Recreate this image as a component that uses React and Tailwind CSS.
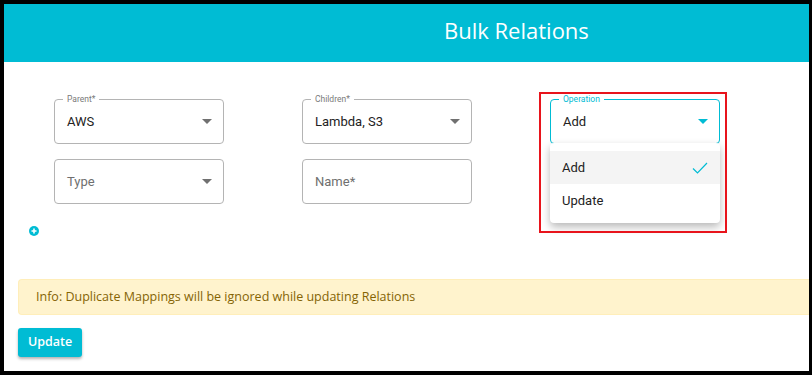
import React from "react";

const roboto = { fontFamily: "Roboto, 'Liberation Sans', sans-serif" };
const openSans = { fontFamily: "'Open Sans', 'Liberation Sans', sans-serif" };

function Caret({ color = "#707070" }) {
    return (
        <svg width="10" height="5" viewBox="0 0 10 5" className="shrink-0">
            <path d="M0 0 L10 0 L5 5 Z" fill={color} />
        </svg>
    );
}

function Field({ label, value, placeholder, select = true, focused = false }) {
    const border = focused ? "border-[#00bcd4]" : "border-[#b4b4b4]";
    return (
        <div className={`relative h-[45px] w-[170px] rounded-[4px] border ${border} flex items-center justify-between pl-[12px] pr-[11px]`}>
            {label ? (
                <span
                    className={`absolute -top-[6px] left-[8px] bg-white px-[4px] text-[8.5px] leading-[10px] ${focused ? "text-[#00bcd4]" : "text-[#7a7a7a]"}`}
                >
                    {label}
                </span>
            ) : null}
            {value ? (
                <span className="text-[13px] text-[#222]">{value}</span>
            ) : (
                <span className="text-[13px] text-[#6f6f6f]">{placeholder}</span>
            )}
            {select ? <Caret color={focused ? "#00bcd4" : "#707070"} /> : null}
        </div>
    );
}

export default function App() {
    return (
        <div className="w-[812px] h-[375px] bg-black pt-[4px] pl-[4px] pr-[3px] pb-[4px]">
            <div className="h-full bg-white flex flex-col overflow-hidden">
                <div className="h-[58px] shrink-0 bg-[#00bcd4] flex items-center pl-[440px]">
                    <h1 className="text-white text-[22px] leading-none -mt-[6px]" style={openSans}>
                        Bulk Relations
                    </h1>
                </div>

                <div className="pl-[50px] pt-[37px] flex gap-[78px]" style={roboto}>
                    <div className="flex flex-col gap-[15px]">
                        <Field label="Parent*" value="AWS" />
                        <Field placeholder="Type" />
                    </div>
                    <div className="flex flex-col gap-[15px]">
                        <Field label="Children*" value="Lambda, S3" />
                        <Field placeholder="Name*" select={false} />
                    </div>
                    <div className="relative">
                        <Field label="Operation" value="Add" focused />
                        <div className="absolute left-0 top-[44px] w-[170px] bg-white rounded-[4px] shadow-[0_4px_8px_rgba(0,0,0,0.28)] pt-[8px] pb-[6px] z-10">
                            <div className="h-[33px] bg-[#f4f4f4] flex items-center justify-between pl-[12px] pr-[12px]">
                                <span className="text-[13px] text-[#222]">Add</span>
                                <svg width="16" height="12" viewBox="0 0 16 12">
                                    <path d="M1 6.5 L5.5 11 L15 1" fill="none" stroke="#00bcd4" strokeWidth="1.2" />
                                </svg>
                            </div>
                            <div className="h-[33px] flex items-center pl-[12px]">
                                <span className="text-[13px] text-[#222]">Update</span>
                            </div>
                        </div>
                        <div className="absolute -left-[11px] -top-[7px] w-[188px] h-[141px] border-2 border-[#e8141c] z-20 pointer-events-none"></div>
                    </div>
                </div>

                <div className="pl-[25px] pt-[22px]">
                    <svg width="10" height="10" viewBox="0 0 10 10">
                        <circle cx="5" cy="5" r="5" fill="#00bcd4" />
                        <path d="M5 2.5 V7.5 M2.5 5 H7.5" stroke="white" strokeWidth="1.6" />
                    </svg>
                </div>

                <div
                    className="mt-[43px] ml-[14px] h-[36px] bg-[#fff3cd] border border-[#ffeeba] border-r-0 rounded-l-[4px] flex items-center pl-[17px] text-[12.5px] text-[#856404]"
                    style={openSans}
                >
                    Info: Duplicate Mappings will be ignored while updating Relations
                </div>

                <div className="pl-[14px] pt-[13px]">
                    <button
                        type="button"
                        className="h-[29px] w-[64px] rounded-[3px] bg-[#00bcd4] text-white text-[12.5px] font-semibold shadow-[0_2px_3px_rgba(0,0,0,0.3)]"
                        style={openSans}
                    >
                        Update
                    </button>
                </div>
            </div>
        </div>
    );
}
